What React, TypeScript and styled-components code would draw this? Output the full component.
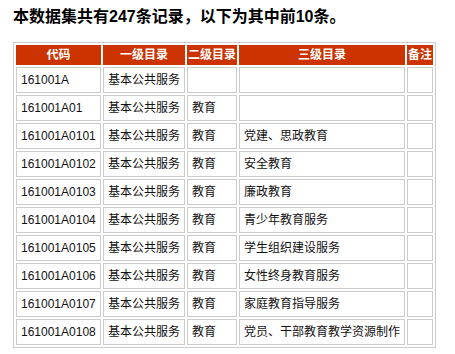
import React from 'react'
import styled, { createGlobalStyle } from 'styled-components'

const GlobalStyle = createGlobalStyle`
    body {
        margin: 0;
        background: #fff;
        font-family: "Liberation Sans", "Noto Sans CJK SC", sans-serif;
        color: #000;
    }
`

const HEADER_RED = '#cc3300'
const CELL_BORDER = '#cccccc'

const Page = styled.div`
    padding: 7px 13px;
`

const Title = styled.h2`
    margin: 0 0 15px 0;
    font-size: 16px;
    line-height: 20px;
    font-weight: 700;
    color: #000;
`

const Table = styled.table`
    width: 423px;
    table-layout: fixed;
    border-collapse: separate;
    border-spacing: 2px;
    border: 1px solid ${CELL_BORDER};
    font-size: 12px;
`

const Th = styled.th<{ $w: number }>`
    box-sizing: border-box;
    width: ${p => p.$w}px;
    height: 20px;
    padding: 0;
    background: ${HEADER_RED};
    border: 1px solid ${HEADER_RED};
    color: #fff;
    font-weight: 700;
    line-height: 18px;
    text-align: center;
    white-space: nowrap;
`

const Td = styled.td`
    box-sizing: border-box;
    height: 26px;
    padding: 4px;
    border: 1px solid ${CELL_BORDER};
    line-height: 16px;
    text-align: left;
    vertical-align: middle;
    white-space: nowrap;
    color: #111;
`

const COLUMNS = [
    { label: '代码', w: 85 },
    { label: '一级目录', w: 82 },
    { label: '二级目录', w: 50 },
    { label: '三级目录', w: 166 },
    { label: '备注', w: 26 }
]

const ROWS = [
    ['161001A', '基本公共服务', '', ''],
    ['161001A01', '基本公共服务', '教育', ''],
    ['161001A0101', '基本公共服务', '教育', '党建、思政教育'],
    ['161001A0102', '基本公共服务', '教育', '安全教育'],
    ['161001A0103', '基本公共服务', '教育', '廉政教育'],
    ['161001A0104', '基本公共服务', '教育', '青少年教育服务'],
    ['161001A0105', '基本公共服务', '教育', '学生组织建设服务'],
    ['161001A0106', '基本公共服务', '教育', '女性终身教育服务'],
    ['161001A0107', '基本公共服务', '教育', '家庭教育指导服务'],
    ['161001A0108', '基本公共服务', '教育', '党员、干部教育教学资源制作']
]

const App = () => {
    return (
        <>
            <GlobalStyle />
            <Page>
                <Title>本数据集共有247条记录，以下为其中前10条。</Title>
                <Table>
                    <thead>
                        <tr>
                            {COLUMNS.map(c => <Th key={c.label} $w={c.w}>{c.label}</Th>)}
                        </tr>
                    </thead>
                    <tbody>
                        {ROWS.map(r => (
                            <tr key={r[0]}>
                                <Td>{r[0]}</Td>
                                <Td>{r[1]}</Td>
                                <Td>{r[2]}</Td>
                                <Td>{r[3]}</Td>
                                <Td></Td>
                            </tr>
                        ))}
                    </tbody>
                </Table>
            </Page>
        </>
    )
}

export default App
